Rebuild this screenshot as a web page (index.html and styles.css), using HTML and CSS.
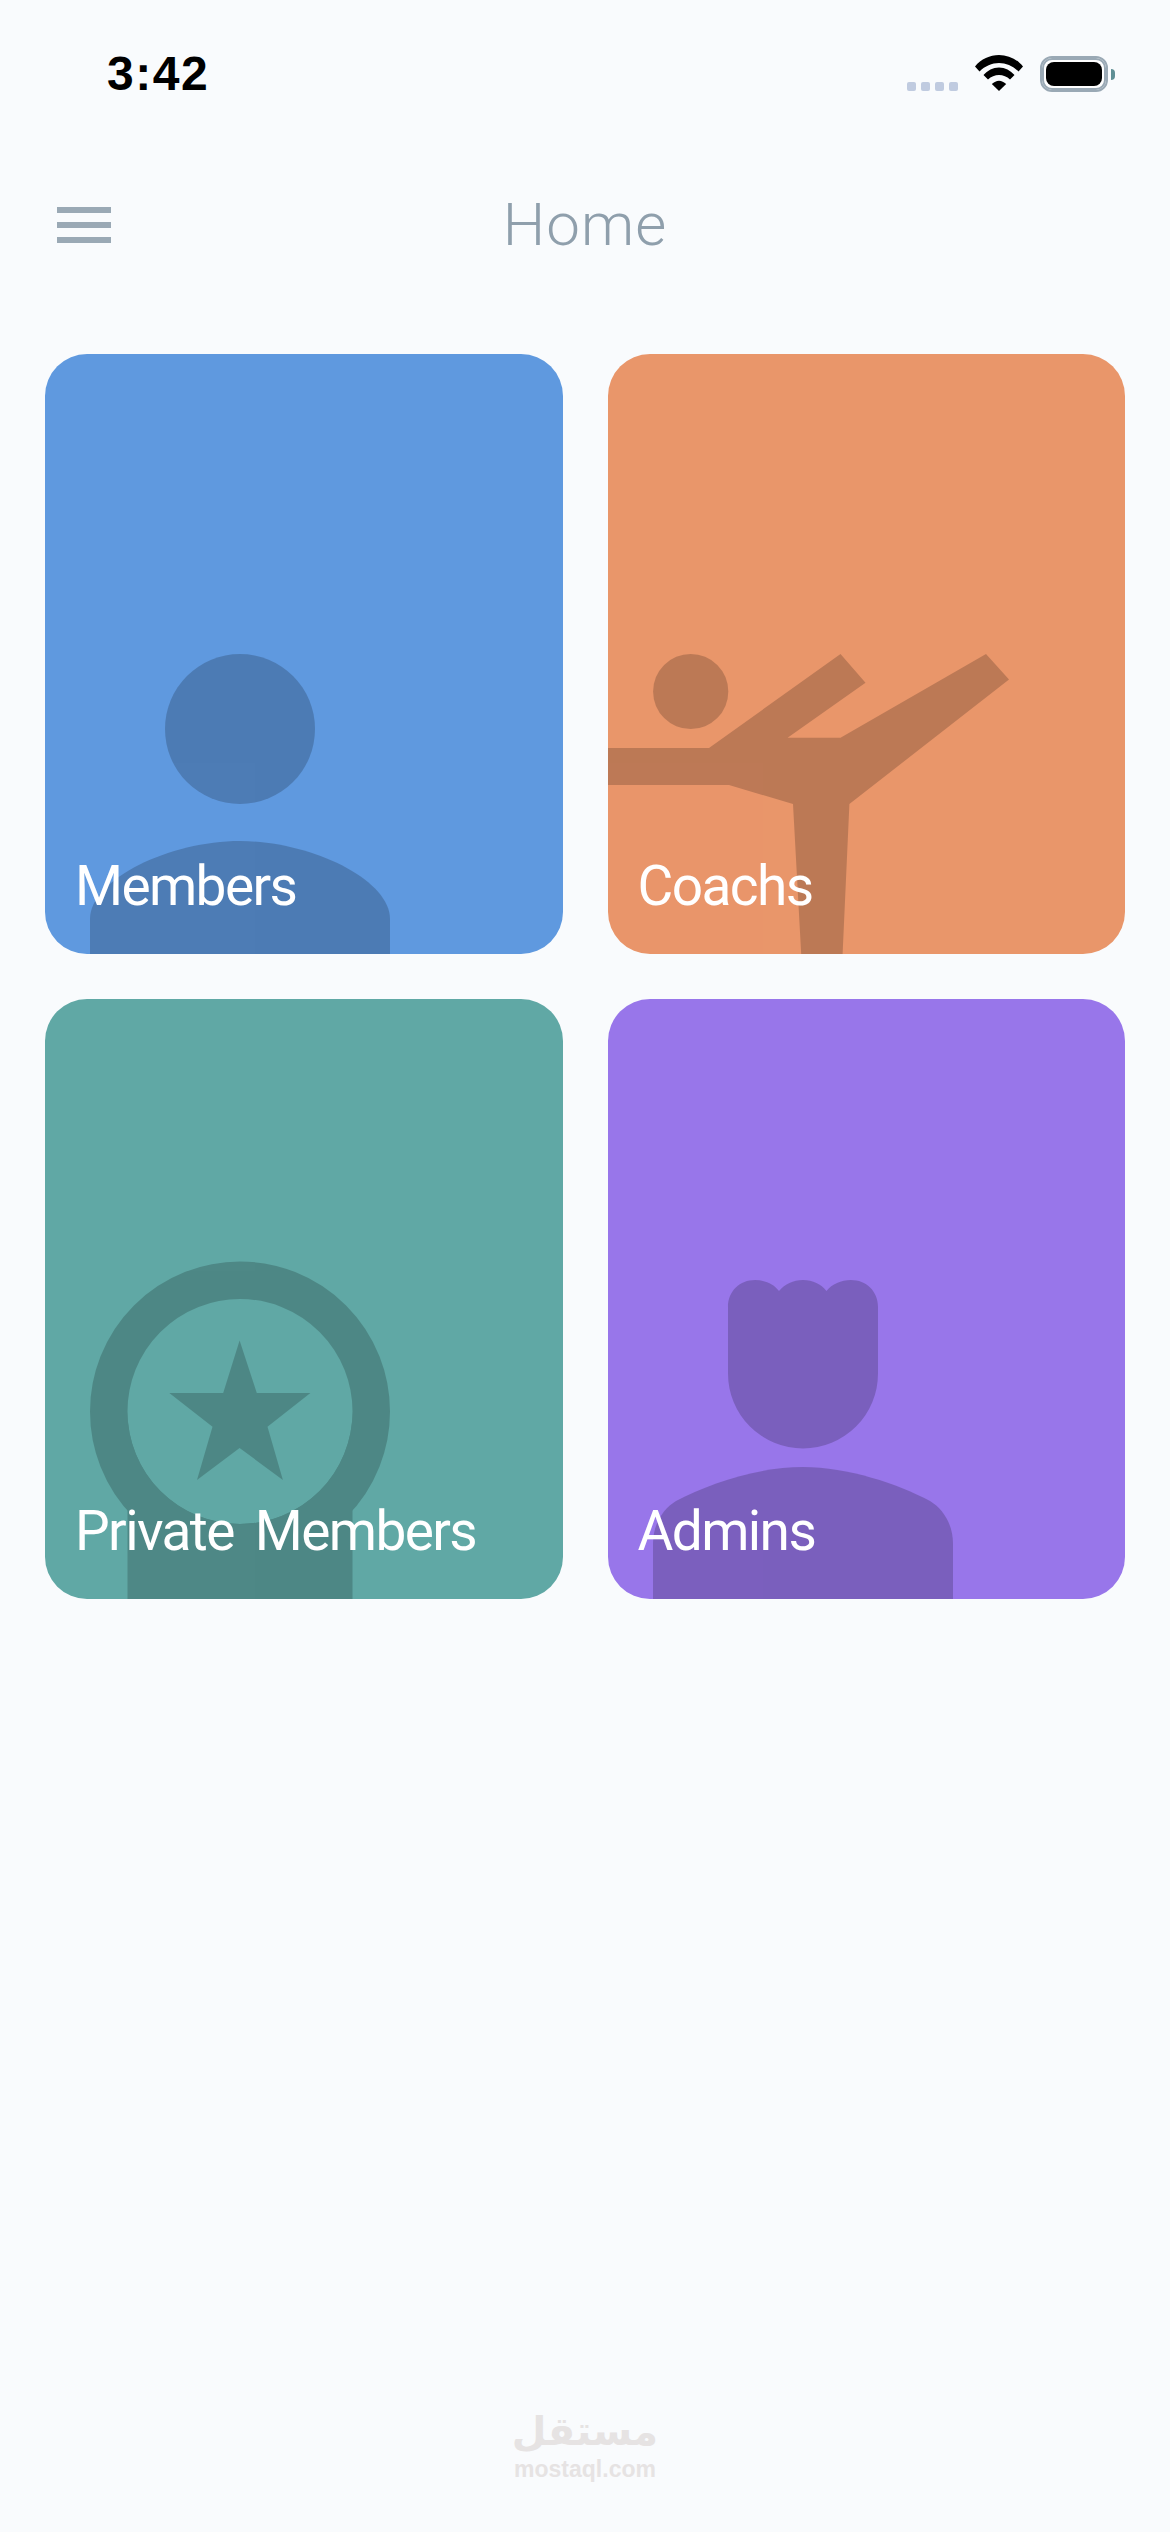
FILE: index.html
```html
<!doctype html>
<html lang="en">
<head>
    <meta charset="utf-8" />
    <meta name="viewport" content="width=device-width, initial-scale=1.0">
    <title>Home</title>
    <link rel="stylesheet" href="styles.css">
</head>
<body>
    <div class="page">

        <!-- status bar -->
        <div class="status-bar">
            <div class="time">3:42</div>
            <div class="status-icons">
                <div class="signal">
                    <span class="signal-dot"></span>
                    <span class="signal-dot"></span>
                    <span class="signal-dot"></span>
                    <span class="signal-dot"></span>
                </div>
                <svg class="wifi" viewBox="0 0 48 36">
                    <path d="M0 11.5C6 4 15 0 24 0S42 4 48 11.5L43.5 16.5C38 11 31 8 24 8S10 11 4.5 16.5Z" />
                    <path d="M8.5 20C12.5 15.5 18 12.5 24 12.5S35.5 15.5 39.5 20L35 24.5C32 21.5 28 20 24 20S16 21.5 13 24.5Z" />
                    <path d="M16.8 29C19 27 21.5 25.7 24 25.7S29 27 31.2 29L24 36Z" />
                </svg>
                <div class="battery">
                    <div class="battery-level"></div>
                </div>
                <div class="battery-cap"></div>
            </div>
        </div>

        <!-- header -->
        <div class="header">
            <div class="menu-button">
                <span class="menu-line"></span>
                <span class="menu-line"></span>
                <span class="menu-line"></span>
            </div>
            <h1 class="title">Home</h1>
        </div>

        <!-- cards -->
        <div class="card-grid">
            <div class="card card-blue">
                <svg class="card-icon" viewBox="0 0 517.5 600">
                    <circle cx="195" cy="375" r="75" />
                    <path d="M45 600V565C45 525 125 487 195 487S345 525 345 565V600Z" />
                </svg>
                <div class="card-label">Members</div>
            </div>

            <div class="card card-orange">
                <svg class="card-icon" viewBox="0 0 517.5 600">
                    <circle cx="82.7" cy="337.5" r="37.6" />
                    <polygon points="0,394 101,394 232.5,300 257.5,328.7 179.6,383.8 232.5,383.8 378,300 401,325.5 241.4,450 234.6,600 193.2,600 185,450 121,431 0,431" />
                </svg>
                <div class="card-label">Coachs</div>
            </div>

            <div class="card card-teal">
                <svg class="card-icon" viewBox="0 0 517.5 600">
                    <circle class="ring" cx="195" cy="412.5" r="131.25" />
                    <path d="M82.5 600V412.5A112.5 112.5 0 0 0 307.5 412.5V600Z" />
                    <polygon points="194.6,341.4 211.8,394 265.4,394 222.5,427.8 237.9,481 194.6,449 152,481 167.5,427.8 124.3,394 178.2,394" />
                </svg>
                <div class="card-label">Private Members</div>
            </div>

            <div class="card card-purple">
                <svg class="card-icon" viewBox="0 0 517.5 600">
                    <path d="M120 374.5V308C120 292 132 281 147 281C157 281 166 285 171 292C177 285 185 281 195 281C205 281 213 285 218.5 292C224 285 233 281 243 281C258 281 270 292 270 308V374.5A75 75 0 0 1 120 374.5Z" />
                    <path d="M45 600V545C45 525 55 510 68 502C100 485 150 468 195 468C240 468 290 485 322 502C335 510 345 525 345 545V600Z" />
                </svg>
                <div class="card-label">Admins</div>
            </div>
        </div>

        <!-- watermark -->
        <div class="watermark">
            <div class="watermark-arabic">مستقل</div>
            <div class="watermark-latin">mostaql.com</div>
        </div>

    </div>
</body>
</html>
```

FILE: styles.css
```css
* {
    box-sizing: border-box;
}

body {
    margin: 0;
    background-color: #f9fbfd;
    font-family: "Liberation Sans", Arial, sans-serif;
}

.page {
    display: flex;
    flex-direction: column;
    height: 2532px;
    overflow: hidden;
}

.status-bar {
    display: flex;
    justify-content: space-between;
    align-items: flex-start;
    height: 180px;
    padding: 50px 55px 0 107px;
}

.time {
    font-size: 48px;
    line-height: 48px;
    font-weight: 700;
    letter-spacing: 1.5px;
    color: #000;
}

.status-icons {
    display: flex;
    align-items: flex-end;
    padding-top: 5px;
}

.signal {
    display: flex;
    gap: 5px;
    margin-right: 17px;
    margin-bottom: 1px;
}

.signal-dot {
    width: 9px;
    height: 9px;
    border-radius: 2px;
    background-color: #c0cbe0;
}

.wifi {
    width: 48px;
    height: 36px;
    margin-right: 17px;
    margin-bottom: 1px;
    fill: #000;
}

.battery {
    width: 68px;
    height: 36px;
    padding: 4px;
    border: 2px solid #9aa9b5;
    border-radius: 12px;
    background-color: #fff;
    box-shadow: inset 0 0 0 2px #9aa9b5;
}

.battery-level {
    height: 100%;
    border-radius: 8px;
    background-color: #000;
}

.battery-cap {
    width: 4px;
    height: 11px;
    margin: 0 0 12px 3px;
    border-radius: 0 5px 5px 0;
    background-color: #5f8f95;
}

.header {
    position: relative;
    display: flex;
    align-items: center;
    justify-content: center;
    height: 90px;
    margin-bottom: 84px;
}

.menu-button {
    position: absolute;
    left: 57px;
    top: 27px;
    display: flex;
    flex-direction: column;
    gap: 9px;
}

.menu-line {
    width: 54px;
    height: 6px;
    background-color: #9aa9b5;
}

.title {
    margin: 0;
    font-family: Roboto, "Liberation Sans", sans-serif;
    font-size: 60px;
    font-weight: 300;
    line-height: 92px;
    letter-spacing: 1px;
    color: #8f9fac;
}

.card-grid {
    display: grid;
    grid-template-columns: 1fr 1fr;
    grid-auto-rows: 600px;
    gap: 45px;
    padding: 0 45px;
}

.card {
    position: relative;
    display: flex;
    flex-direction: column;
    justify-content: flex-end;
    padding: 0 30px 36px;
    border-radius: 42px;
    overflow: hidden;
}

.card-blue {
    background-color: #5f99df;
}

.card-orange {
    background-color: #e9966a;
}

.card-teal {
    background-color: #60a8a5;
}

.card-purple {
    background-color: #9876ea;
}

/* shapes are all black, the svg opacity darkens the card colour */
.card-icon {
    position: absolute;
    left: 0;
    top: 0;
    width: 100%;
    height: 100%;
    fill: #000;
    opacity: 0.19;
}

.ring {
    fill: none;
    stroke: #000;
    stroke-width: 37.5;
}

.card-label {
    position: relative;
    font-family: Roboto, "Liberation Sans", sans-serif;
    font-size: 55px;
    line-height: 64px;
    letter-spacing: -1.6px;
    word-spacing: 9px;
    color: #fff;
}

.watermark {
    display: flex;
    flex-direction: column;
    align-items: center;
    margin-top: auto;
    padding-bottom: 50px;
    color: #e6e3e3;
}

.watermark-arabic {
    font-family: "DejaVu Sans", sans-serif;
    font-size: 40px;
    font-weight: 700;
    line-height: 50px;
}

.watermark-latin {
    font-size: 23px;
    font-weight: 700;
    line-height: 26px;
}
```
